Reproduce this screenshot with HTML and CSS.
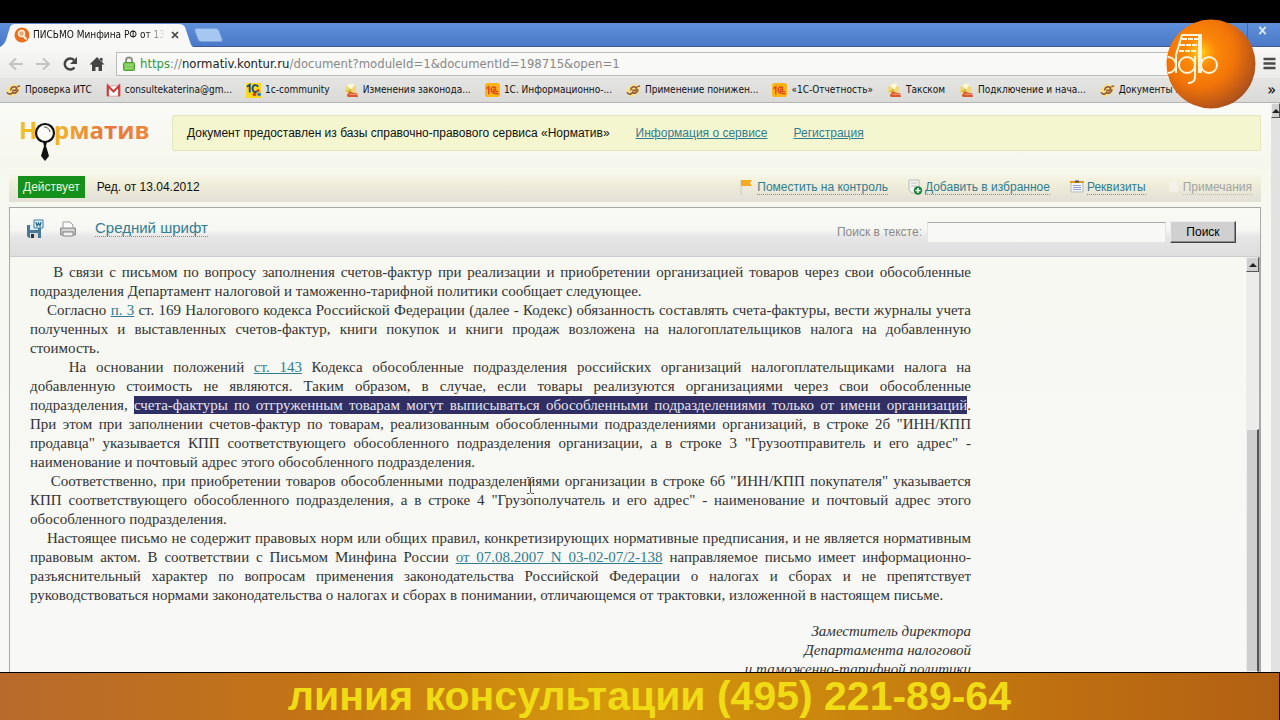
FILE: index.html
```html
<!DOCTYPE html>
<html lang="ru">
<head>
<meta charset="utf-8">
<title>ПИСЬМО Минфина РФ</title>
<link rel="stylesheet" href="styles.css">
</head>
<body>
<svg class="defs" aria-hidden="true">
  <defs>
    <symbol id="its" viewBox="0 0 16 16"><path d="M0 8L7 1l9 3-3 7-8 4z" fill="#f8e27c"/><path d="M1 10c2 3 5 2 6 0 2 2 5 0 6-3M5 8c0-4 4-5 6-3 1 3-3 4-4 2" fill="none" stroke="#8f5440" stroke-width="1.700"/><path d="M12 4l3-1" stroke="#8f5440" stroke-width="1.500"/></symbol>
    <symbol id="globe" viewBox="0 0 16 16"><circle cx="7" cy="7" r="6" fill="#f0d878"/><path d="M3 3a6 6 0 0 1 8-1L8 7z" fill="#fdf9dc"/><path d="M2 9l5-3 2 5z" fill="#d9b23c"/><path d="M3 13l3-4 3 1 5 1 1 4H4z" fill="#d9582c"/><path d="M6 12h8" stroke="#f6a888"/></symbol>
    <symbol id="onec" viewBox="0 0 16 16"><rect width="16" height="15" rx="3" fill="#fbb416"/><path d="M1.500 6L4 4v8M12 5.500C9 3 6 5 6.500 8c.5 3 3 3.500 8 3.500M12 7.500C10 6 8.500 7 9 9h5" fill="none" stroke="#e0461c" stroke-width="1.600"/></symbol>
    <symbol id="community" viewBox="0 0 16 16"><rect width="16" height="16" fill="#fbd91c"/><path d="M1 4l3-2v8M13 4c-2-3-6-2-6 2s3 4 5 3" fill="none" stroke="#17488a" stroke-width="2"/><circle cx="9" cy="12" r="2" fill="#d8402c"/><circle cx="14" cy="12" r="2" fill="#2b7fc4"/><circle cx="13" cy="8" r="1.500" fill="#d8402c"/></symbol>
    <symbol id="mail" viewBox="0 0 16 16"><path d="M1 3h14v11H1z" fill="#fff" stroke="#d9a0a0"/><path d="M2 14V3l6 6 6-6v11" fill="none" stroke="#d43c3c" stroke-width="2.200"/></symbol>
  </defs>
</svg>

<div class="letterbox"></div>
<header class="browser">
  <div class="tabs">
    <div class="tab">
      <svg class="tab-shape" viewBox="0 0 193 24" preserveAspectRatio="none" aria-hidden="true"><path d="M0 24Q4 22 6 17L10 4Q11 1 15 1H179Q183 1 185 4L190 19Q191 23 193 24z" fill="#f8f8f7"/></svg>
      <svg class="tab-icon" viewBox="0 0 16 16" aria-hidden="true"><circle cx="8" cy="8" r="7.500" fill="#e8701c"/><circle cx="7.500" cy="6.500" r="3" fill="#f4a468" stroke="#fff3e4" stroke-width="1.500"/><path d="M9.500 9l3 3.500" stroke="#fff3e4" stroke-width="2"/></svg>
      <span class="tab-title">ПИСЬМО Минфина РФ от 13</span>
      <button class="tab-close" aria-label="Закрыть вкладку"><svg viewBox="0 0 8 8"><path d="M1 1l6 6M7 1L1 7" stroke="#444" stroke-width="1.700"/></svg></button>
    </div>
    <button class="new-tab" aria-label="Новая вкладка"></button>
    <button class="win-close" aria-label="Закрыть окно"><svg viewBox="0 0 10 10"><path d="M1.500 1l7 8M8.500 1l-7 8" stroke="#dce8fc" stroke-width="2"/></svg></button>
  </div>
  <div class="toolbar">
    <button class="tool" aria-label="Назад"><svg viewBox="0 0 16 16"><path d="M15 8H2M8 2.500L2 8l6 5.500" fill="none" stroke="#c3c3bf" stroke-width="2"/></svg></button>
    <button class="tool" aria-label="Вперёд"><svg viewBox="0 0 16 16"><path d="M1 8h13M8 2.500L14 8l-6 5.500" fill="none" stroke="#c3c3bf" stroke-width="2"/></svg></button>
    <button class="tool" aria-label="Обновить"><svg viewBox="0 0 16 16"><path d="M12.500 11.500A5.500 5.500 0 1 1 12 4" fill="none" stroke="#444" stroke-width="2.400"/><path d="M15 1v7H8z" fill="#444"/></svg></button>
    <button class="tool" aria-label="Домашняя страница"><svg viewBox="0 0 16 16"><path d="M8 1l7.500 7.500H13V15H9.500v-4h-3v4H3V8.500H.5z" fill="#444"/><path d="M11 2h2.500v4L11 3.500z" fill="#444"/></svg></button>
    <div class="address">
      <svg class="lock" viewBox="0 0 12 16" aria-hidden="true"><path d="M3 7V4.500a3 3 0 0 1 6 0V7" fill="none" stroke="#8c948a" stroke-width="2"/><rect x=".5" y="6.500" width="11" height="8" rx="1" fill="#78c850" stroke="#509c34"/><path d="M2 9h8M2 12h8" stroke="#a6e084"/></svg>
      <span class="url"><span class="secure">https</span>://<b>normativ.kontur.ru</b>/document?moduleId=1&amp;documentId=198715&amp;open=1</span>
    </div>
    <button class="menu" aria-label="Меню"><svg viewBox="0 0 12 13"><path d="M0 2h12M0 6.500h12M0 11h12" stroke="#4a4a4a" stroke-width="2.400"/></svg></button>
  </div>
  <nav class="bookmarks">
    <a href="#"><svg><use href="#its"/></svg>Проверка ИТС</a>
    <a href="#"><svg><use href="#mail"/></svg>consultekaterina@gm...</a>
    <a href="#"><svg><use href="#community"/></svg>1c-community</a>
    <a href="#"><svg><use href="#globe"/></svg>Изменения законода...</a>
    <a href="#"><svg><use href="#onec"/></svg>1С. Информационно-...</a>
    <a href="#"><svg><use href="#its"/></svg>Применение понижен...</a>
    <a href="#"><svg><use href="#onec"/></svg>«1С-Отчетность»</a>
    <a href="#"><svg><use href="#globe"/></svg>Такском</a>
    <a href="#"><svg><use href="#globe"/></svg>Подключение и нача...</a>
    <a href="#"><svg><use href="#its"/></svg>Документы по</a>
    <button class="more" aria-label="Другие закладки">»</button>
  </nav>
</header>

<div class="viewport">
  <main class="page">
    <div class="brand-row">
      <svg class="brand" viewBox="0 0 132 48" role="img" aria-label="Норматив">
        <defs><linearGradient id="warm" gradientUnits="userSpaceOnUse" x1="0" y1="0" x2="132" y2="0"><stop offset="0" stop-color="#f2c01c"/><stop offset=".35" stop-color="#f0ac30"/><stop offset=".65" stop-color="#e8743c"/><stop offset="1" stop-color="#eb8a3c"/></linearGradient></defs>
        <text x="0" y="24" class="brand-text" fill="url(#warm)">Н</text>
        <text x="35" y="24" class="brand-text" fill="url(#warm)">рматив</text>
        <circle cx="26" cy="18" r="9" fill="#fbfbf4" stroke="#111" stroke-width="2.200"/>
        <path d="M25 12q5 0 6 5" fill="none" stroke="#555"/>
        <path d="M24 27h4l-1 4 3 10-4 5-4-5 3-10z" fill="#111"/>
      </svg>
      <div class="notice">
        <span>Документ предоставлен из базы справочно-правового сервиса «Норматив»</span>
        <a href="#">Информация о сервисе</a>
        <a href="#">Регистрация</a>
      </div>
    </div>
    <div class="status">
      <span class="badge">Действует</span>
      <span class="edition">Ред. от 13.04.2012</span>
      <div class="actions">
        <a href="#"><svg viewBox="0 0 16 16"><path d="M2 1v14h2" fill="none" stroke="#ccc"/><path d="M2 1h11l-2 3 2 3H2z" fill="#f4ac20"/></svg><span>Поместить на контроль</span></a>
        <a href="#"><svg viewBox="0 0 16 16"><path d="M2 1h10v13H5l-3-3z" fill="#f5f5f2" stroke="#bbb"/><path d="M4 4h6M4 7h6" stroke="#bbb"/><circle cx="11" cy="11.500" r="4.200" fill="#198038"/><path d="M8.500 11.500h5M11 9v5" stroke="#fff" stroke-width="1.500"/></svg><span>Добавить в избранное</span></a>
        <a href="#"><svg viewBox="0 0 16 16"><path d="M2 3h12v10H2z" fill="#f4f4f6" stroke="#b6bac6"/><path d="M1 3h14" stroke="#e09a28" stroke-width="2"/><path d="M6 2.500h4" stroke="#555" stroke-width="2"/><path d="M4 6.500h8M4 8.500h8M4 10.500h8" stroke="#93a4c8"/></svg><span>Реквизиты</span></a>
        <a href="#" class="off"><svg viewBox="0 0 16 16"><path d="M4 2h6l3 3v8H4z" fill="#f3f1ea"/></svg><span>Примечания</span></a>
      </div>
    </div>
    <section class="panel">
      <form class="panel-bar">
        <button type="button" class="icon" aria-label="Сохранить в Word"><svg viewBox="0 0 18 20"><path d="M1 6h14v13H3l-2-2z" fill="#4a7898"/><path d="M4 6h8v5H4z" fill="#e4eef4"/><path d="M4 14h8v5H4z" fill="#dcdcdc"/><path d="M5 15h3v4H5z" fill="#333"/><path d="M8 1h9v8H8z" fill="#e4f2fa" stroke="#3c7ca4"/><path d="M10 3l1 4 1.500-3L14 7l1-4" fill="none" stroke="#2a6c98" stroke-width="1.300"/></svg></button>
        <button type="button" class="icon" aria-label="Печать"><svg viewBox="0 0 18 20"><path d="M4 9V3h7l3 3v3" fill="#fafafa" stroke="#999"/><path d="M1.500 9h15v7h-15z" fill="#bdbdbd" stroke="#909090"/><path d="M3 11h12" stroke="#eee"/><path d="M4 13h10v4H4z" fill="#f2f2f2" stroke="#888"/></svg></button>
        <a href="#" class="font-link">Средний шрифт</a>
        <label for="find">Поиск в тексте:</label>
        <input id="find" type="text">
        <button type="submit" class="find-button">Поиск</button>
      </form>
      <div class="panel-body">
        <article class="letter">
          <p><span class="line">&nbsp;&nbsp;&nbsp;&nbsp;В связи с письмом по вопросу заполнения счетов-фактур при реализации и приобретении организацией товаров через свои обособленные</span> <span class="line">подразделения Департамент налоговой и таможенно-тарифной политики сообщает следующее.</span></p>
          <p><span class="line">&nbsp;&nbsp;&nbsp;&nbsp;Согласно <a href="#">п. 3</a> ст. 169 Налогового кодекса Российской Федерации (далее - Кодекс) обязанность составлять счета-фактуры, вести журналы учета</span> <span class="line">полученных и выставленных счетов-фактур, книги покупок и книги продаж возложена на налогоплательщиков налога на добавленную</span> <span class="line">стоимость.</span></p>
          <p><span class="line">&nbsp;&nbsp;&nbsp;&nbsp;На основании положений <a href="#">ст. 143</a> Кодекса обособленные подразделения российских организаций налогоплательщиками налога на</span> <span class="line">добавленную стоимость не являются. Таким образом, в случае, если товары реализуются организациями через свои обособленные</span> <span class="line">подразделения, <mark>счета-фактуры по отгруженным товарам могут выписываться обособленными подразделениями только от имени организаций</mark>.</span> <span class="line">При этом при заполнении счетов-фактур по товарам, реализованным обособленными подразделениями организаций, в строке 2б "ИНН/КПП</span> <span class="line">продавца" указывается КПП соответствующего обособленного подразделения организации, а в строке 3 "Грузоотправитель и его адрес" -</span> <span class="line">наименование и почтовый адрес этого обособленного подразделения.</span></p>
          <p><span class="line">&nbsp;&nbsp;&nbsp;&nbsp;Соответственно, при приобретении товаров обособленными подразделениями организации в строке 6б "ИНН/КПП покупателя" указывается</span> <span class="line">КПП соответствующего обособленного подразделения, а в строке 4 "Грузополучатель и его адрес" - наименование и почтовый адрес этого</span> <span class="line">обособленного подразделения.</span></p>
          <p><span class="line">&nbsp;&nbsp;&nbsp;&nbsp;Настоящее письмо не содержит правовых норм или общих правил, конкретизирующих нормативные предписания, и не является нормативным</span> <span class="line">правовым актом. В соответствии с Письмом Минфина России <a href="#">от 07.08.2007 N 03-02-07/2-138</a> направляемое письмо имеет информационно-</span> <span class="line">разъяснительный характер по вопросам применения законодательства Российской Федерации о налогах и сборах и не препятствует</span> <span class="line">руководствоваться нормами законодательства о налогах и сборах в понимании, отличающемся от трактовки, изложенной в настоящем письме.</span></p>
          <p class="sign">Заместитель директора<br>Департамента налоговой<br>и таможенно-тарифной политики</p>
        </article>
        <div class="scroll"><div class="scroll-up"></div><div class="thumb"></div></div>
      </div>
    </section>
  </main>
  <div class="outer-scroll"><div class="scroll-up"></div></div>
</div>

<footer class="banner">линия консультации (495) 221-89-64</footer>

<svg class="ball" viewBox="0 0 90 90" role="img" aria-label="dgb">
  <defs>
    <radialGradient id="orange" cx=".38" cy=".37" r=".7"><stop offset="0" stop-color="#ffd820"/><stop offset=".1" stop-color="#ffb010"/><stop offset=".25" stop-color="#fb8808"/><stop offset=".55" stop-color="#f27408"/><stop offset=".8" stop-color="#c85e14"/><stop offset="1" stop-color="#a04c20"/></radialGradient>
    <clipPath id="disc"><circle cx="45" cy="45" r="44"/></clipPath>
  </defs>
  <circle cx="45" cy="45" r="44.500" fill="url(#orange)"/>
  <g clip-path="url(#disc)" fill="none" stroke="#fff3d8" stroke-width="2">
    <circle cx="2" cy="46" r="8"/><path d="M10 54V36l6-20h20"/>
    <circle cx="21" cy="46" r="8"/><path d="M29 37v21q0 6-7 6"/>
    <circle cx="43" cy="46" r="8"/><path d="M34 54V17" stroke-width="4"/>
    <path d="M16 20h16M14 26h17M13 32h17" stroke-dasharray="5 1"/>
  </g>
</svg>
<svg class="caret" viewBox="0 0 7 17" aria-hidden="true"><path d="M0 .5h2.500l1 1 1-1H7M0 16.500h2.500l1-1 1 1H7M3.500 1v15" fill="none" stroke="#555"/></svg>
</body>
</html>
```
FILE: styles.css
```css
* { box-sizing: border-box; }
body {
  margin: 0;
  height: 100vh;
  display: flex;
  flex-direction: column;
  overflow: hidden;
  position: relative;
  background: #f8f8f7;
  color: #111;
  font: 12px/16px "Liberation Sans", Arial, sans-serif;
}
button { font: inherit; padding: 0; border: 0; background: none; }
svg { display: block; flex: none; }
.defs { position: absolute; width: 0; height: 0; }
a { color: #2f7d92; }
.letterbox { flex: none; height: 23px; background: #000; }

.browser { font-family: "DejaVu Sans Condensed", "DejaVu Sans", Tahoma, sans-serif; flex: none; }
.tabs {
  display: flex;
  align-items: flex-end;
  height: 24px;
  background: linear-gradient(#5f90da, #4b79c8);
  border-bottom: 1px solid #3c5c98;
}
.tab {
  position: relative;
  display: flex;
  align-items: center;
  width: 193px;
  height: 24px;
  margin-bottom: -1px;
  padding: 0 14px 0 14px;
  font-size: 10px;
}
.tab-shape { position: absolute; inset: 0; width: 100%; height: 100%; }
.tab-icon { position: relative; width: 16px; height: 16px; margin-right: 3px; }
.tab-title {
  position: relative;
  flex: 1;
  overflow: hidden;
  white-space: nowrap;
  mask-image: linear-gradient(90deg, #000 85%, transparent);
}
.tab-close { position: relative; margin: 0 0 0 6px; }
.tab-close svg { width: 8px; height: 8px; }
.new-tab {
  width: 25px;
  height: 14px;
  margin: 0 0 4px 3px;
  border: 1px solid #7da3dc;
  border-radius: 3px;
  background: #a5c8f2;
  transform: skewX(20deg);
}
.win-close { width: 30px; height: 15px; margin: 0 3px 8px auto; border-left: 1px solid #4468ac; }
.win-close svg { width: 9px; height: 9px; margin: 0 auto; }

.toolbar {
  display: flex;
  align-items: center;
  gap: 11px;
  height: 31px;
  padding: 4px 4px 2px 8px;
  background: linear-gradient(#f8f8f7, #ebebea);
}
.tool svg { width: 16px; height: 16px; }
.address {
  flex: 1;
  display: flex;
  align-items: center;
  gap: 5px;
  height: 24px;
  padding: 0 6px;
  border: 1px solid #bcbcbc;
  background: #f9f9f8;
}
.lock { width: 12px; height: 16px; }
.url { font-size: 13px; line-height: 20px; color: #888; white-space: nowrap; }
.url b { font-weight: 400; color: #222; }
.secure { color: #2f9838; }
.menu svg { width: 13px; height: 13px; }
.bookmarks {
  display: flex;
  align-items: center;
  gap: 14px;
  height: 25px;
  padding: 0 4px 0 6px;
  background: linear-gradient(#e4e4e3, #dadad9);
  border-bottom: 1px solid #b4b4b4;
  font-size: 10px;
  white-space: nowrap;
}
.bookmarks a { display: flex; align-items: center; gap: 4px; color: #111; text-decoration: none; }
.bookmarks svg { width: 15px; height: 15px; }
.more { margin-left: auto; font-size: 16px; }

.viewport { flex: 1; min-height: 0; display: flex; }
.page {
  flex: 1;
  min-width: 0;
  display: flex;
  flex-direction: column;
  padding: 12px 10px 0 9px;
  background: linear-gradient(#fafaf8, #f6f7ec 60px, #f7f8f1 120px, #f8f8f7);
}
.brand-row { display: flex; align-items: flex-start; padding-left: 10px; }
.brand { width: 132px; height: 48px; }
.brand-text { font: bold 24px "Open Sans", sans-serif; }
.notice {
  flex: 1;
  display: flex;
  align-items: center;
  gap: 26px;
  height: 36px;
  margin-left: 21px;
  padding: 0 14px;
  border: 1px solid #e6e6be;
  border-radius: 2px;
  background: #f4f6d0;
}
.status {
  display: flex;
  align-items: center;
  height: 30px;
  margin-top: 9px;
  padding: 0 9px;
  background: linear-gradient(#f8f8ee, #f0eed8 40%, #e2dfd8);
}
.badge { padding: 3px 5px; background: #15901b; color: #e8f6dc; line-height: 16px; }
.edition { margin-left: 12px; }
.actions { display: flex; gap: 19px; margin-left: auto; }
.actions a { display: flex; align-items: center; gap: 2px; text-decoration: none; }
.actions span { border-bottom: 1px dotted #5c98a8; line-height: 14px; }
.actions svg { width: 16px; height: 16px; }
.actions .off { color: #a4a4a0; }
.actions .off span { border-color: #bbb; }

.panel {
  flex: 1;
  min-height: 0;
  display: flex;
  flex-direction: column;
  margin-top: 5px;
  border: 1px solid #a8a8a8;
  border-bottom: 0;
}
.panel-bar {
  display: flex;
  align-items: center;
  height: 49px;
  margin: 0;
  padding: 0 24px 0 16px;
  background: linear-gradient(#fafaf6, #f6f6f2 45%, #e6e6e6 60%, #dededf);
  border-bottom: 1px solid #ccc;
}
.icon { margin-right: 15px; padding-bottom: 6px; }
.icon svg { width: 18px; height: 20px; }
.font-link {
  margin: 0 auto 8px 3px;
  border-bottom: 1px dotted #5c98a8;
  text-decoration: none;
  font-size: 15px;
}
.panel-bar label { color: #8a8a8a; margin-right: 5px; }
.panel-bar input {
  width: 239px;
  height: 21px;
  border: 1px solid #e4e4e4;
  border-top-color: #aaa;
  background: #f8f8f7;
}
.find-button {
  width: 66px;
  height: 22px;
  margin-left: 4px;
  border: 1px solid;
  border-color: #eee #444 #444 #eee;
  background: #d0d0d0;
  box-shadow: inset -1px -1px #888;
}
.panel-body { flex: 1; min-height: 0; display: flex; justify-content: space-between; }
.letter {
  width: 941px;
  margin-left: 20px;
  padding-top: 6px;
  overflow: hidden;
  color: #333;
  font: 15px/19px "Liberation Serif", "Times New Roman", serif;
}
.letter p { margin: 0; text-align: justify; }
.line { display: block; text-align-last: justify; white-space: nowrap; }
.line:last-child { text-align-last: left; }
.letter mark { background: #302e62; color: #e6e6f4; padding: 1px 0; }
.letter .sign { margin-top: 17px; text-align: right; font-style: italic; }
.scroll { width: 14px; flex: none; overflow: hidden; display: flex; flex-direction: column; background: #ececeb; border-right: 1px solid #aaa; }
.scroll-up {
  flex: none;
  height: 15px;
  border: 1px solid;
  border-color: #eee #555 #555 #eee;
  background: #d0d0d0;
  display: grid;
  place-items: center;
}
.scroll-up::before { content: ""; border: 4px solid transparent; border-top: 0; border-bottom-color: #222; }
.thumb { flex: 1; margin-top: 157px; background: #cfcfcf; border: 1px solid #eee; border-right: 2px solid #555; }
.outer-scroll { width: 9px; background: #e2e2e2; overflow: hidden; flex: none; }

.banner {
  flex: none;
  height: 48px;
  padding-left: 20px;
  overflow: hidden;
  border-top: 1px solid #000;
  border-right: 1px solid #000;
  background: linear-gradient(90deg, #b86a2c, #c47414 25%, #d4980c 47%, #cb860e 65%, #bf7010 82%, #b26014);
  color: #f0dc14;
  text-align: center;
  font: bold 41px/47px "Liberation Sans", Arial, sans-serif;
}
.ball { position: absolute; top: 19px; right: 24px; width: 90px; height: 90px; }
.caret { position: absolute; left: 527px; top: 477px; width: 7px; height: 17px; }
```
